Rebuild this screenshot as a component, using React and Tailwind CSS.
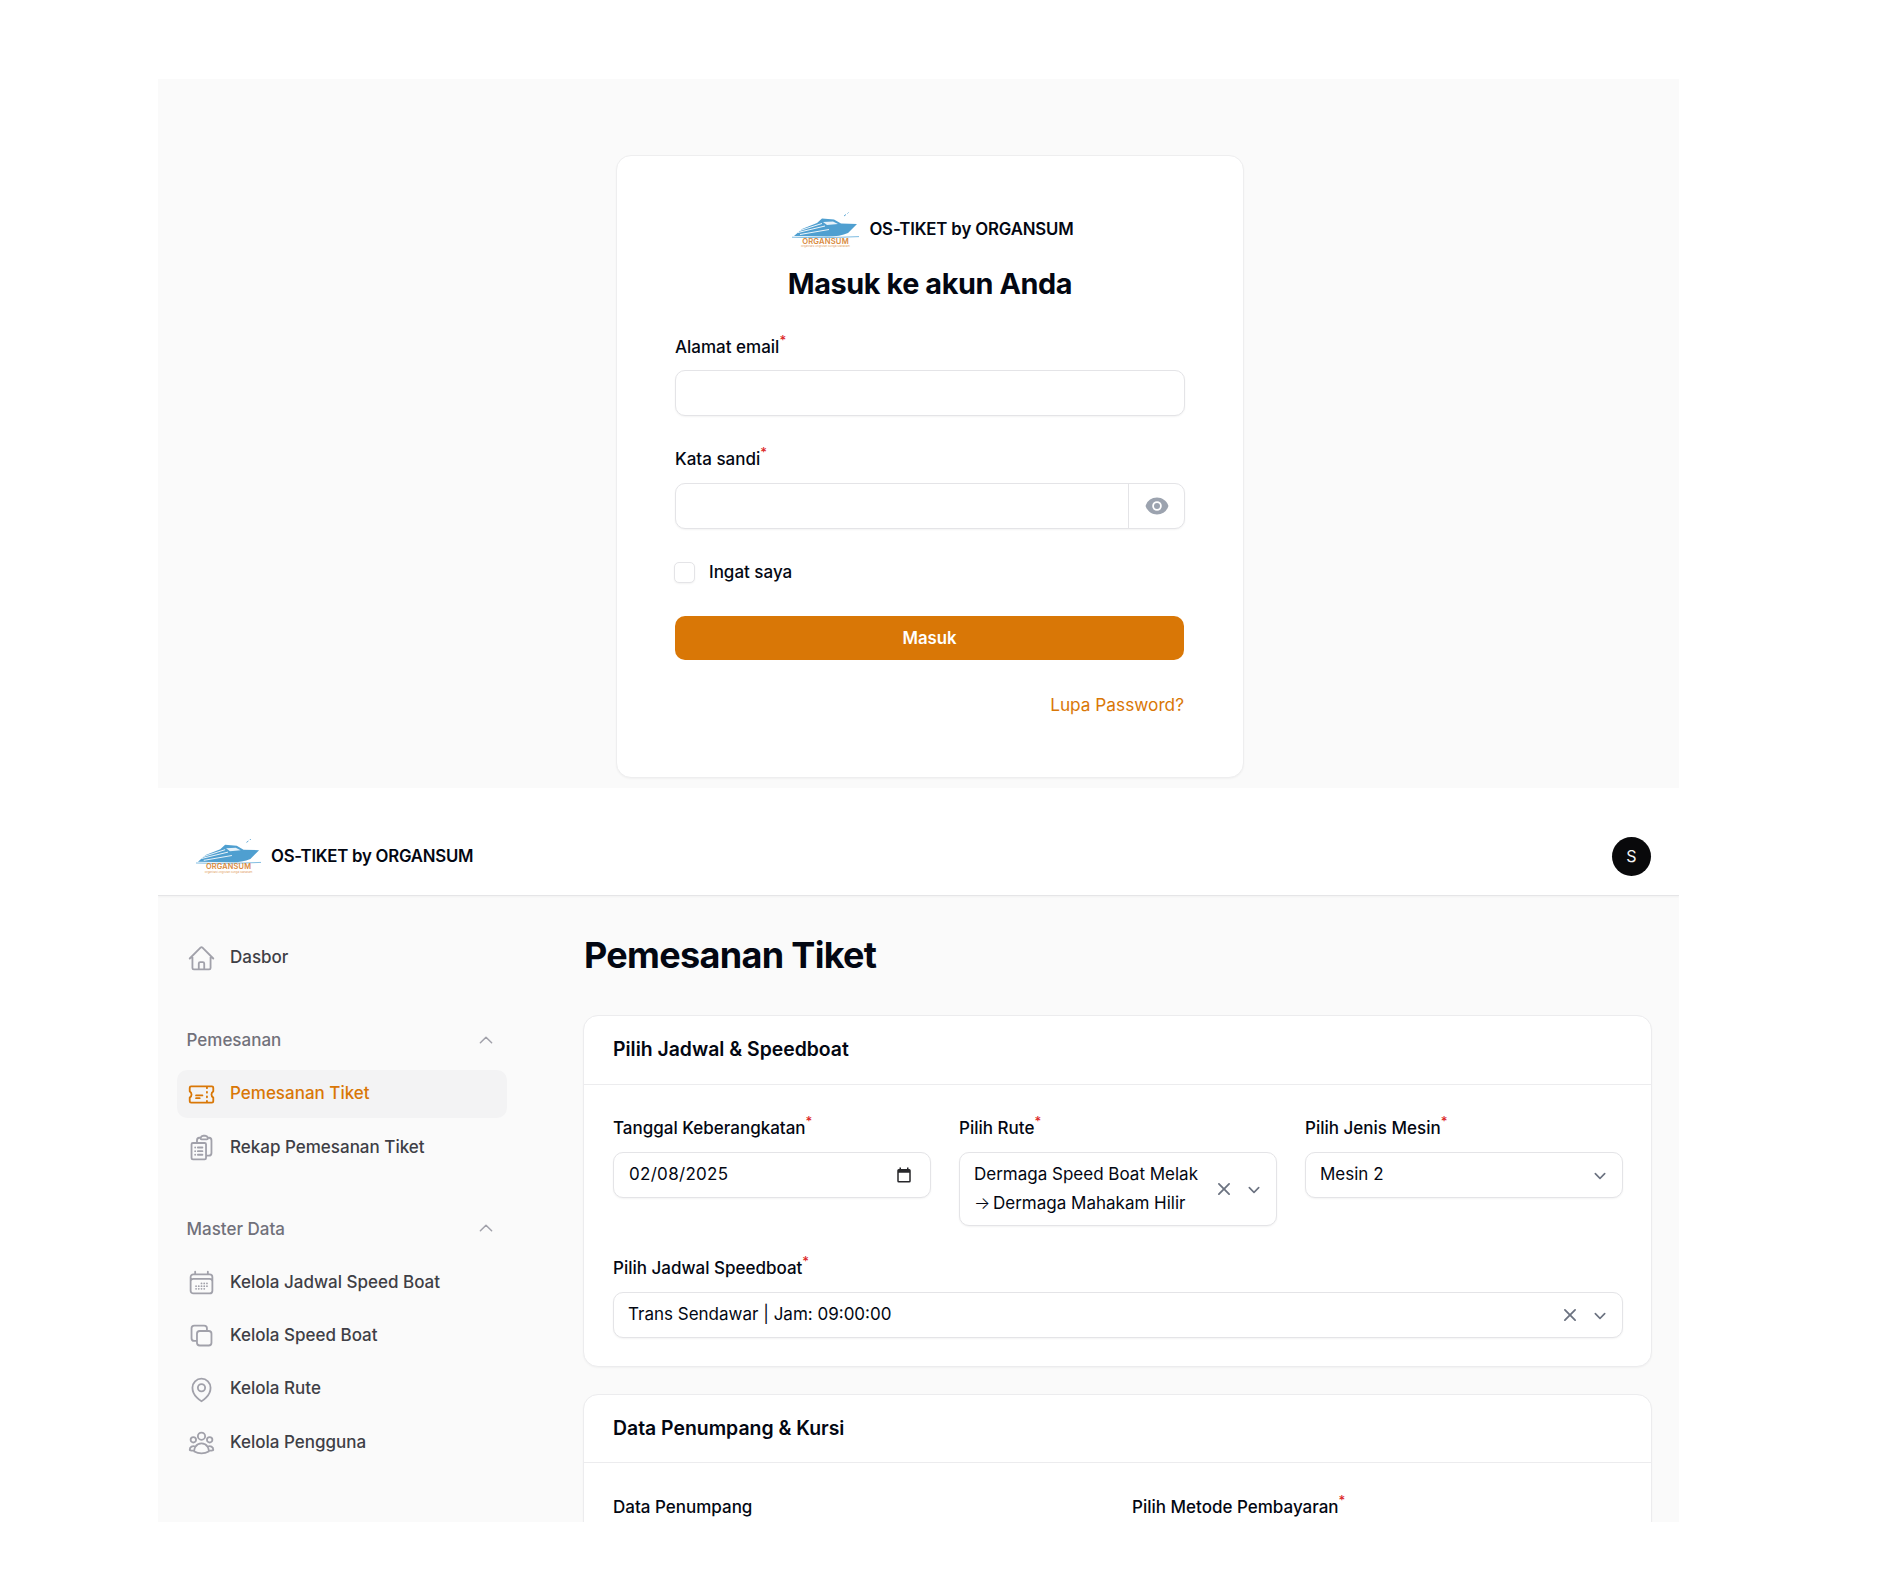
import React from "react";
import {
  HiOutlineHome, HiOutlineTicket, HiOutlineClipboardDocumentList, HiOutlineCalendarDays,
  HiOutlineSquare2Stack, HiOutlineUserGroup, HiOutlineChevronUp, HiMiniEye, HiMiniXMark, HiMiniChevronDown,
} from "react-icons/hi2";

function PinIcon({ className }) {
  return (
    <svg className={className} viewBox="0 0 24 24" fill="none" stroke="currentColor" strokeWidth="1.5" strokeLinecap="round" strokeLinejoin="round">
      <circle cx="12" cy="10.5" r="3" />
      <path d="M19.5 10.5c0 7.14-7.5 11.25-7.5 11.25S4.5 17.64 4.5 10.5a7.5 7.5 0 1 1 15 0Z" />
    </svg>
  );
}

function Logo({ className }) {
  return (
    <svg className={className} viewBox="0 0 68 36" fill="none">
      <path d="M2 24 L10 17 L25 11 L30 6.5 L42 7.5 L49 11.5 L65 12 L56 21 Q48 24.5 36 24.5 Z" fill="#4f9fd0" />
      <path d="M8 18.5 L30 11.5 M6 20.5 L33 14 M8 22.5 L37 17.5" stroke="#ffffff" strokeWidth="0.9" />
      <path d="M31 10 L41 9.5 L46 12 L35 13 Z" fill="#e6f2fa" />
      <path d="M0 25.2 Q30 26.2 67 24.6" stroke="#6fb3dc" strokeWidth="0.9" />
      <path d="M52 4 L54 2.5 M55.5 1.5 L56.5 0.5" stroke="#4f9fd0" strokeWidth="0.9" />
      <text x="33.5" y="31.6" textAnchor="middle" fontFamily="Inter, sans-serif" fontSize="7.6" fontWeight="600" letterSpacing="0.2" fill="#d98a3d">ORGANSUM</text>
      <text x="33.5" y="35.4" textAnchor="middle" fontFamily="Inter, sans-serif" fontSize="2.7" fill="#e3a266">Organisasi Angkutan Sungai Mahakam</text>
    </svg>
  );
}

function Label({ children, required = true, className = "" }) {
  return (
    <div className={`h-6 flex items-center text-[17px] leading-6 font-medium text-[#030712] ${className}`}>
      <span>{children}</span>
      {required && <span className="text-[#dc2626] text-[13px] leading-none self-start mt-[-1px] font-medium">*</span>}
    </div>
  );
}

const box = "bg-white border border-[#e4e4e7] rounded-[10px] shadow-[0_1px_2px_rgba(0,0,0,0.05)]";

function NavItem({ icon: Icon, children, active }) {
  return (
    <div className={`h-12 flex items-center pl-[10px] gap-[14px] rounded-[10px] text-[17px] font-medium ${active ? "bg-[#f3f3f4] text-[#d97706]" : "text-[#3f3f46]"}`}>
      <Icon className={`w-[29px] h-[29px] shrink-0 ${active ? "text-[#d97706]" : "text-[#a1a1aa]"}`} />
      <span>{children}</span>
    </div>
  );
}

function Group({ title, children, className = "" }) {
  return (
    <div className={className}>
      <div className="h-6 flex items-center justify-between pl-[9.5px] pr-[12px] text-[17px] font-medium text-[#71717a]">
        <span>{title}</span>
        <HiOutlineChevronUp className="w-[18px] h-[18px] -mt-[2px] text-[#a1a1aa] stroke-2" />
      </div>
      <div className="mt-[17px] flex flex-col gap-[5.4px]">{children}</div>
    </div>
  );
}

function CardHead({ children, className = "" }) {
  return (
    <div className={`flex items-center px-[29px] border-b border-[#ececee] text-[19.4px] font-semibold text-[#030712] ${className}`}>
      {children}
    </div>
  );
}

function Chevron() {
  return <HiMiniChevronDown className="w-[22px] h-[22px] text-[#6b7280]" />;
}

function Clear() {
  return <HiMiniXMark className="w-[24px] h-[24px] text-[#6b7280]" />;
}

export default function App() {
  return (
    <div className="w-[1880px] h-[1576px] bg-white pt-[79px] pl-[158px] font-['Inter',sans-serif] overflow-hidden">
      <div className="w-[1521px]">
        {/* Login */}
        <section className="h-[709px] bg-[#fafafa] pt-[76px] pl-[458px]">
          <div className="w-[628px] h-[623px] bg-white border border-[#eeeeef] rounded-[15px] shadow-[0_1px_2px_rgba(0,0,0,0.04)] px-[58px] pt-[56px]">
            <div className="flex items-center justify-center gap-[9px] h-[36px] pl-[6px]">
              <Logo className="w-[68px] h-[36px]" />
              <span className="text-[16.8px] font-semibold text-[#030712] tracking-[-0.15px]">OS-TIKET by ORGANSUM</span>
            </div>
            <h1 className="mt-[18px] text-center text-[28.8px] leading-[36px] font-bold text-[#030712] tracking-[-0.4px]">Masuk ke akun Anda</h1>
            <Label className="mt-[33px] text-[17.2px]">Alamat email</Label>
            <input className={`mt-[11px] block w-full h-[46px] ${box}`} />
            <Label className="mt-[31px] text-[17.2px]">Kata sandi</Label>
            <div className={`mt-[12px] flex w-full h-[46px] ${box}`}>
              <div className="flex-1 border-r border-[#e4e4e7]" />
              <div className="w-[55px] flex items-center justify-center">
                <HiMiniEye className="w-[24px] h-[24px] text-[#9ca3af]" />
              </div>
            </div>
            <div className="mt-[32px] flex items-center gap-[14px] h-[22px] -ml-px">
              <div className="w-[21px] h-[21px] rounded-[5px] bg-white border border-[#e4e4e7] shadow-[0_1px_2px_rgba(0,0,0,0.05)]" />
              <span className="pt-[2px] text-[17px] font-medium text-[#030712]">Ingat saya</span>
            </div>
            <button className="mt-[33px] w-[509px] h-[44px] pt-[2px] rounded-[10px] bg-[#d97706] text-white text-[16.8px] font-semibold">Masuk</button>
            <div className="mt-[32px] h-6 pt-[2px] pr-[1px] flex items-center justify-end text-[17.25px] font-normal text-[#d97706]">Lupa Password?</div>
          </div>
        </section>

        {/* Dashboard */}
        <section className="h-[734px] bg-[#fafafa] overflow-hidden">
          <header className="h-[108px] pt-[29px] bg-white border-b border-[#e5e5e7] shadow-[0_1px_2px_rgba(0,0,0,0.04)] flex items-center justify-between pl-[38px] pr-[28px]">
            <div className="flex items-center gap-[9px]">
              <Logo className="w-[66px] h-[36px]" />
              <span className="pt-[2px] text-[16.8px] font-semibold text-[#030712] tracking-[-0.25px]">OS-TIKET by ORGANSUM</span>
            </div>
            <div className="w-[39px] h-[39px] rounded-full bg-[#09090b] flex items-center justify-center text-[#f4f4f5] text-[16px]">S</div>
          </header>
          <div className="flex">
            <aside className="w-[425px] shrink-0 pt-[38px] pl-[19px] pr-[76px]">
              <NavItem icon={HiOutlineHome}>Dasbor</NavItem>
              <Group title="Pemesanan" className="mt-[47px]">
                <NavItem icon={HiOutlineTicket} active>Pemesanan Tiket</NavItem>
                <NavItem icon={HiOutlineClipboardDocumentList}>Rekap Pemesanan Tiket</NavItem>
              </Group>
              <Group title="Master Data" className="mt-[46px]">
                <NavItem icon={HiOutlineCalendarDays}>Kelola Jadwal Speed Boat</NavItem>
                <NavItem icon={HiOutlineSquare2Stack}>Kelola Speed Boat</NavItem>
                <NavItem icon={PinIcon}>Kelola Rute</NavItem>
                <NavItem icon={HiOutlineUserGroup}>Kelola Pengguna</NavItem>
              </Group>
            </aside>
            <main className="w-[1069px] pt-[39px]">
              <h2 className="pl-[1px] text-[36px] leading-[40px] font-bold text-[#030712] tracking-[-0.68px]">Pemesanan Tiket</h2>

              <div className="mt-[40px] bg-white border border-[#ececee] rounded-[15px] shadow-[0_1px_2px_rgba(0,0,0,0.04)]">
                <CardHead className="h-[69px]">Pilih Jadwal &amp; Speedboat</CardHead>
                <div className="pl-[29px] pr-[28px] pt-[31px] pb-[28px]">
                  <div className="grid grid-cols-3 gap-x-[28px] items-start">
                    <div>
                      <Label>Tanggal Keberangkatan</Label>
                      <div className={`mt-[12px] h-[46px] flex items-center justify-between pl-[15px] pr-[17px] text-[17px] text-[#030712] tracking-[0.3px] ${box}`}>
                        <span>02/08/2025</span>
                        <svg className="w-[18px] h-[18px]" viewBox="0 0 24 24" fill="#27272a">
                          <path d="M19 4h-1V2h-2v2H8V2H6v2H5a2 2 0 0 0-2 2v14a2 2 0 0 0 2 2h14a2 2 0 0 0 2-2V6a2 2 0 0 0-2-2Zm0 16H5V9h14v11Z" />
                        </svg>
                      </div>
                    </div>
                    <div>
                      <Label>Pilih Rute</Label>
                      <div className={`mt-[12px] h-[74px] flex items-center pl-[14px] pr-[11px] ${box}`}>
                        <div className="flex-1 text-[17px] leading-[29px] text-[#030712]">
                          Dermaga Speed Boat Melak<br />
                          <span className="font-light mr-[-2px]">→</span> Dermaga Mahakam Hilir
                        </div>
                        <div className="flex items-center gap-[7px]">
                          <Clear />
                          <Chevron />
                        </div>
                      </div>
                    </div>
                    <div>
                      <Label>Pilih Jenis Mesin</Label>
                      <div className={`mt-[12px] h-[46px] flex items-center justify-between pl-[14px] pr-[11px] text-[17px] text-[#030712] ${box}`}>
                        <span>Mesin 2</span>
                        <Chevron />
                      </div>
                    </div>
                  </div>
                  <Label className="mt-[30px]">Pilih Jadwal Speedboat</Label>
                  <div className={`mt-[12px] h-[46px] flex items-center justify-between pl-[14px] pr-[11px] text-[17px] text-[#030712] ${box}`}>
                    <span>Trans Sendawar | Jam: 09:00:00</span>
                    <div className="flex items-center gap-[7px]">
                      <Clear />
                      <Chevron />
                    </div>
                  </div>
                </div>
              </div>

              <div className="mt-[27px] bg-white border border-[#ececee] rounded-[15px] shadow-[0_1px_2px_rgba(0,0,0,0.04)]">
                <CardHead className="h-[68px]">Data Penumpang &amp; Kursi</CardHead>
                <div className="pl-[29px] pr-[28px] pt-[32px] pb-[28px] grid grid-cols-2 gap-x-[28px]">
                  <Label required={false}>Data Penumpang</Label>
                  <Label>Pilih Metode Pembayaran</Label>
                </div>
              </div>
            </main>
          </div>
        </section>
      </div>
    </div>
  );
}
